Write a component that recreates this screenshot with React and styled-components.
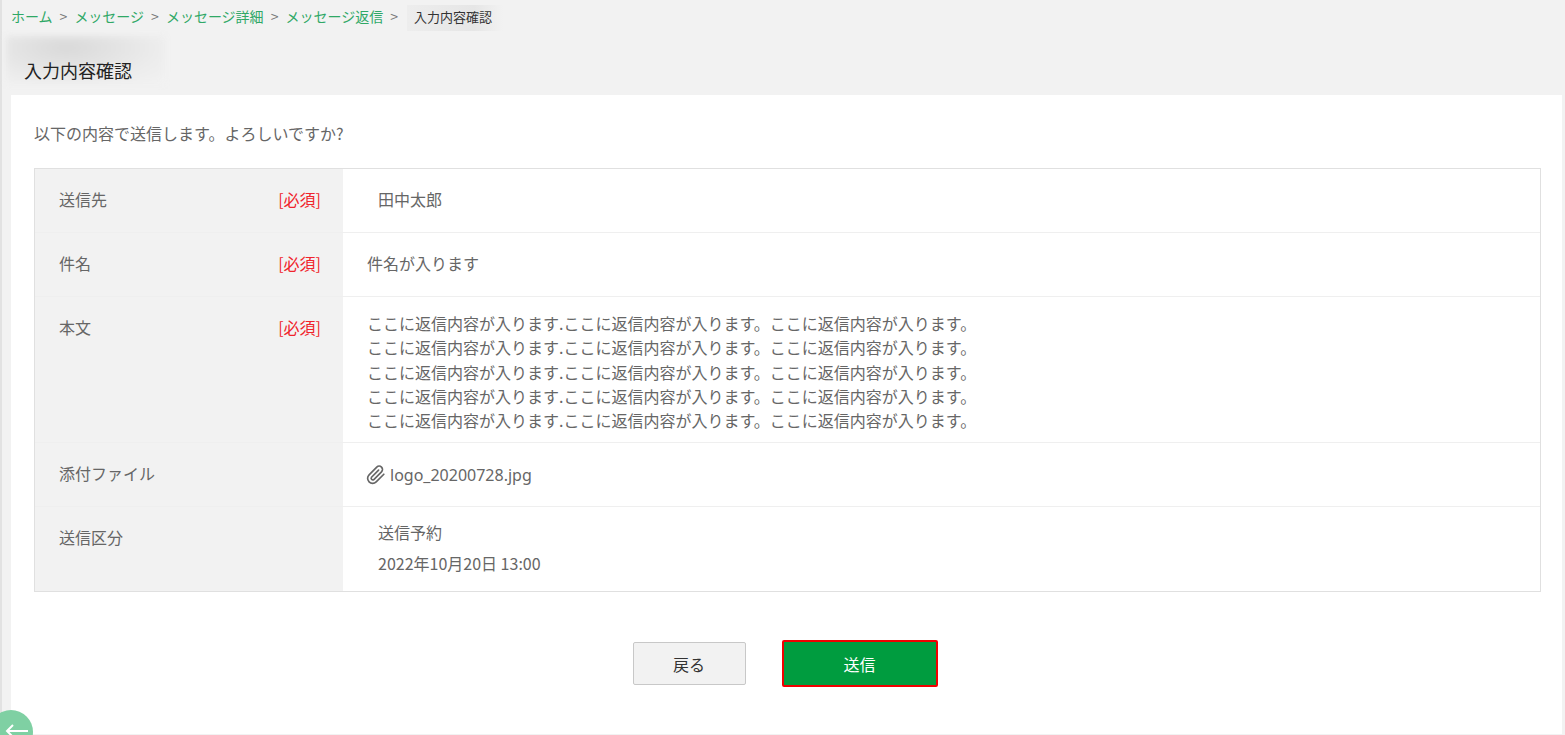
import React from "react"
import styled, { createGlobalStyle } from "styled-components"

const FONT = `"Noto Sans CJK JP", "Noto Sans", sans-serif`

const GlobalStyle = createGlobalStyle`
html, body {
    margin: 0;
    height: 100%;
    overflow: hidden;
    background: #f2f2f2;
}
* {
    box-sizing: border-box;
}
`

const REPLY_LINE = "ここに返信内容が入ります.ここに返信内容が入ります。ここに返信内容が入ります。"

export default function App() {
    return (
        <>
            <GlobalStyle />
            <Page>
                <Breadcrumbs>
                    <Crumb>ホーム</Crumb>
                    <Sep>&gt;</Sep>
                    <Crumb>メッセージ</Crumb>
                    <Sep>&gt;</Sep>
                    <Crumb>メッセージ詳細</Crumb>
                    <Sep>&gt;</Sep>
                    <Crumb>メッセージ返信</Crumb>
                    <Sep>&gt;</Sep>
                    <Current>入力内容確認</Current>
                </Breadcrumbs>
                <Title>入力内容確認</Title>
                <Card>
                    <Intro>以下の内容で送信します。よろしいですか?</Intro>
                    <Table>
                        <Row $height={64}>
                            <Label>送信先<Required>[必須]</Required></Label>
                            <Value $indent={35}>田中太郎</Value>
                        </Row>
                        <Row $height={64}>
                            <Label>件名<Required>[必須]</Required></Label>
                            <Value>件名が入ります</Value>
                        </Row>
                        <Row $height={146}>
                            <Label>本文<Required>[必須]</Required></Label>
                            <Value>
                                {[0, 1, 2, 3, 4].map(i => <BodyLine key={i}>{REPLY_LINE}</BodyLine>)}
                            </Value>
                        </Row>
                        <Row $height={64}>
                            <Label>添付ファイル</Label>
                            <FileValue>
                                <svg width="20" height="22" viewBox="0 0 24 24" fill="none" stroke="#666" strokeWidth="2" strokeLinecap="round" strokeLinejoin="round">
                                    <path d="M21.4 11.1l-9.2 9.2a6 6 0 0 1-8.5-8.5l9.2-9.2a4 4 0 0 1 5.7 5.7l-9.2 9.2a2 2 0 0 1-2.8-2.8l8.5-8.5" />
                                </svg>
                                logo_20200728.jpg
                            </FileValue>
                        </Row>
                        <Row $height={85} $last>
                            <Label>送信区分</Label>
                            <ScheduleValue>
                                <div>送信予約</div>
                                <div>2022年10月20日 13:00</div>
                            </ScheduleValue>
                        </Row>
                    </Table>
                    <Actions>
                        <BackButton>戻る</BackButton>
                        <SendButton>送信</SendButton>
                    </Actions>
                </Card>
                <ReturnFab>
                    <svg width="24" height="14" viewBox="0 0 24 14" fill="none" stroke="#fff" strokeWidth="2">
                        <path d="M23 7H2M8 1L2 7l6 6" />
                    </svg>
                </ReturnFab>
            </Page>
        </>
    )
}

const Page = styled.div`
position: relative;
height: 735px;
padding: 0 3px 1px 11px;
display: flex;
flex-direction: column;
background: #f2f2f2;
font-family: ${FONT};
color: #666;
overflow: hidden;
&::before {
    content: "";
    position: absolute;
    left: 0;
    top: 0;
    bottom: 0;
    width: 2px;
    background: #e2e2e2;
}
`

const Breadcrumbs = styled.nav`
height: 34px;
padding-top: 5px;
display: flex;
align-items: flex-start;
font-size: 14px;
line-height: 22px;
`

const Crumb = styled.span`
color: #2fa866;
`

const Sep = styled.span`
color: #777;
margin: 0 7px;
`

const Current = styled.span`
margin-left: 2px;
padding: 0 11px 0 7px;
height: 26px;
line-height: 24px;
font-size: 13px;
color: #333;
background: linear-gradient(90deg, #ededed, #e6e6e6 70%, #f2f2f2);
`

const Title = styled.h1`
position: relative;
height: 61px;
margin: 0;
padding: 22px 0 0 13px;
font-size: 18px;
line-height: 28px;
font-weight: 400;
color: #222;
&::before {
    content: "";
    position: absolute;
    left: -5px;
    top: 2px;
    width: 159px;
    height: 48px;
    background: radial-gradient(ellipse at 38% 25%, #d9d9d9, #ececec 65%, #f2f2f2 100%);
    filter: blur(3px);
}
& > * {
    position: relative;
}
isolation: isolate;
&::before {
    z-index: -1;
}
`

const Card = styled.main`
flex: 1;
background: #fff;
padding: 24px 21px 0 23px;
`

const Intro = styled.p`
margin: 0;
height: 49px;
font-size: 16px;
line-height: 28px;
`

const Table = styled.section`
border: 1px solid #e0e0e0;
`

const Row = styled.div`
display: flex;
height: ${p => p.$height - (p.$last ? 1 : 0)}px;
border-bottom: ${p => p.$last ? "none" : "1px solid #efefef"};
font-size: 16px;
`

const Label = styled.div`
width: 308px;
flex-shrink: 0;
padding: 16px 22px 0 24px;
line-height: 28px;
display: flex;
justify-content: space-between;
background: #f2f2f2;
`

const Required = styled.span`
color: #f0242c;
`

const Value = styled.div`
flex: 1;
padding: ${p => p.$indent ? "16px 0 0 35px" : "16px 0 0 24px"};
line-height: 28px;
`

const BodyLine = styled.div`
line-height: 24.3px;
&:first-child {
    margin-top: -2px;
}
`

const FileValue = styled.div`
flex: 1;
padding: 0 0 0 23px;
display: flex;
align-items: center;
gap: 4px;
font-family: "Noto Sans", ${FONT};
`

const ScheduleValue = styled.div`
flex: 1;
padding: 10px 0 0 35px;
line-height: 31px;
`

const Actions = styled.div`
display: flex;
justify-content: center;
align-items: center;
gap: 36px;
margin-top: 48px;
padding-right: 5px;
`

const BackButton = styled.button`
width: 113px;
height: 43px;
border: 1px solid #c8c8c8;
border-radius: 2px;
background: #f2f2f2;
color: #333;
font-family: ${FONT};
font-size: 16px;
`

const SendButton = styled.button`
width: 156px;
height: 47px;
border: 2px solid #f00000;
border-radius: 2px;
background: #009c3f;
color: #fff;
font-family: ${FONT};
font-size: 16px;
`

const ReturnFab = styled.div`
position: absolute;
left: -11px;
top: 710px;
width: 44px;
height: 44px;
border-radius: 50%;
background: #7fd0a3;
display: flex;
justify-content: center;
padding-top: 14px;
padding-left: 11px;
`
